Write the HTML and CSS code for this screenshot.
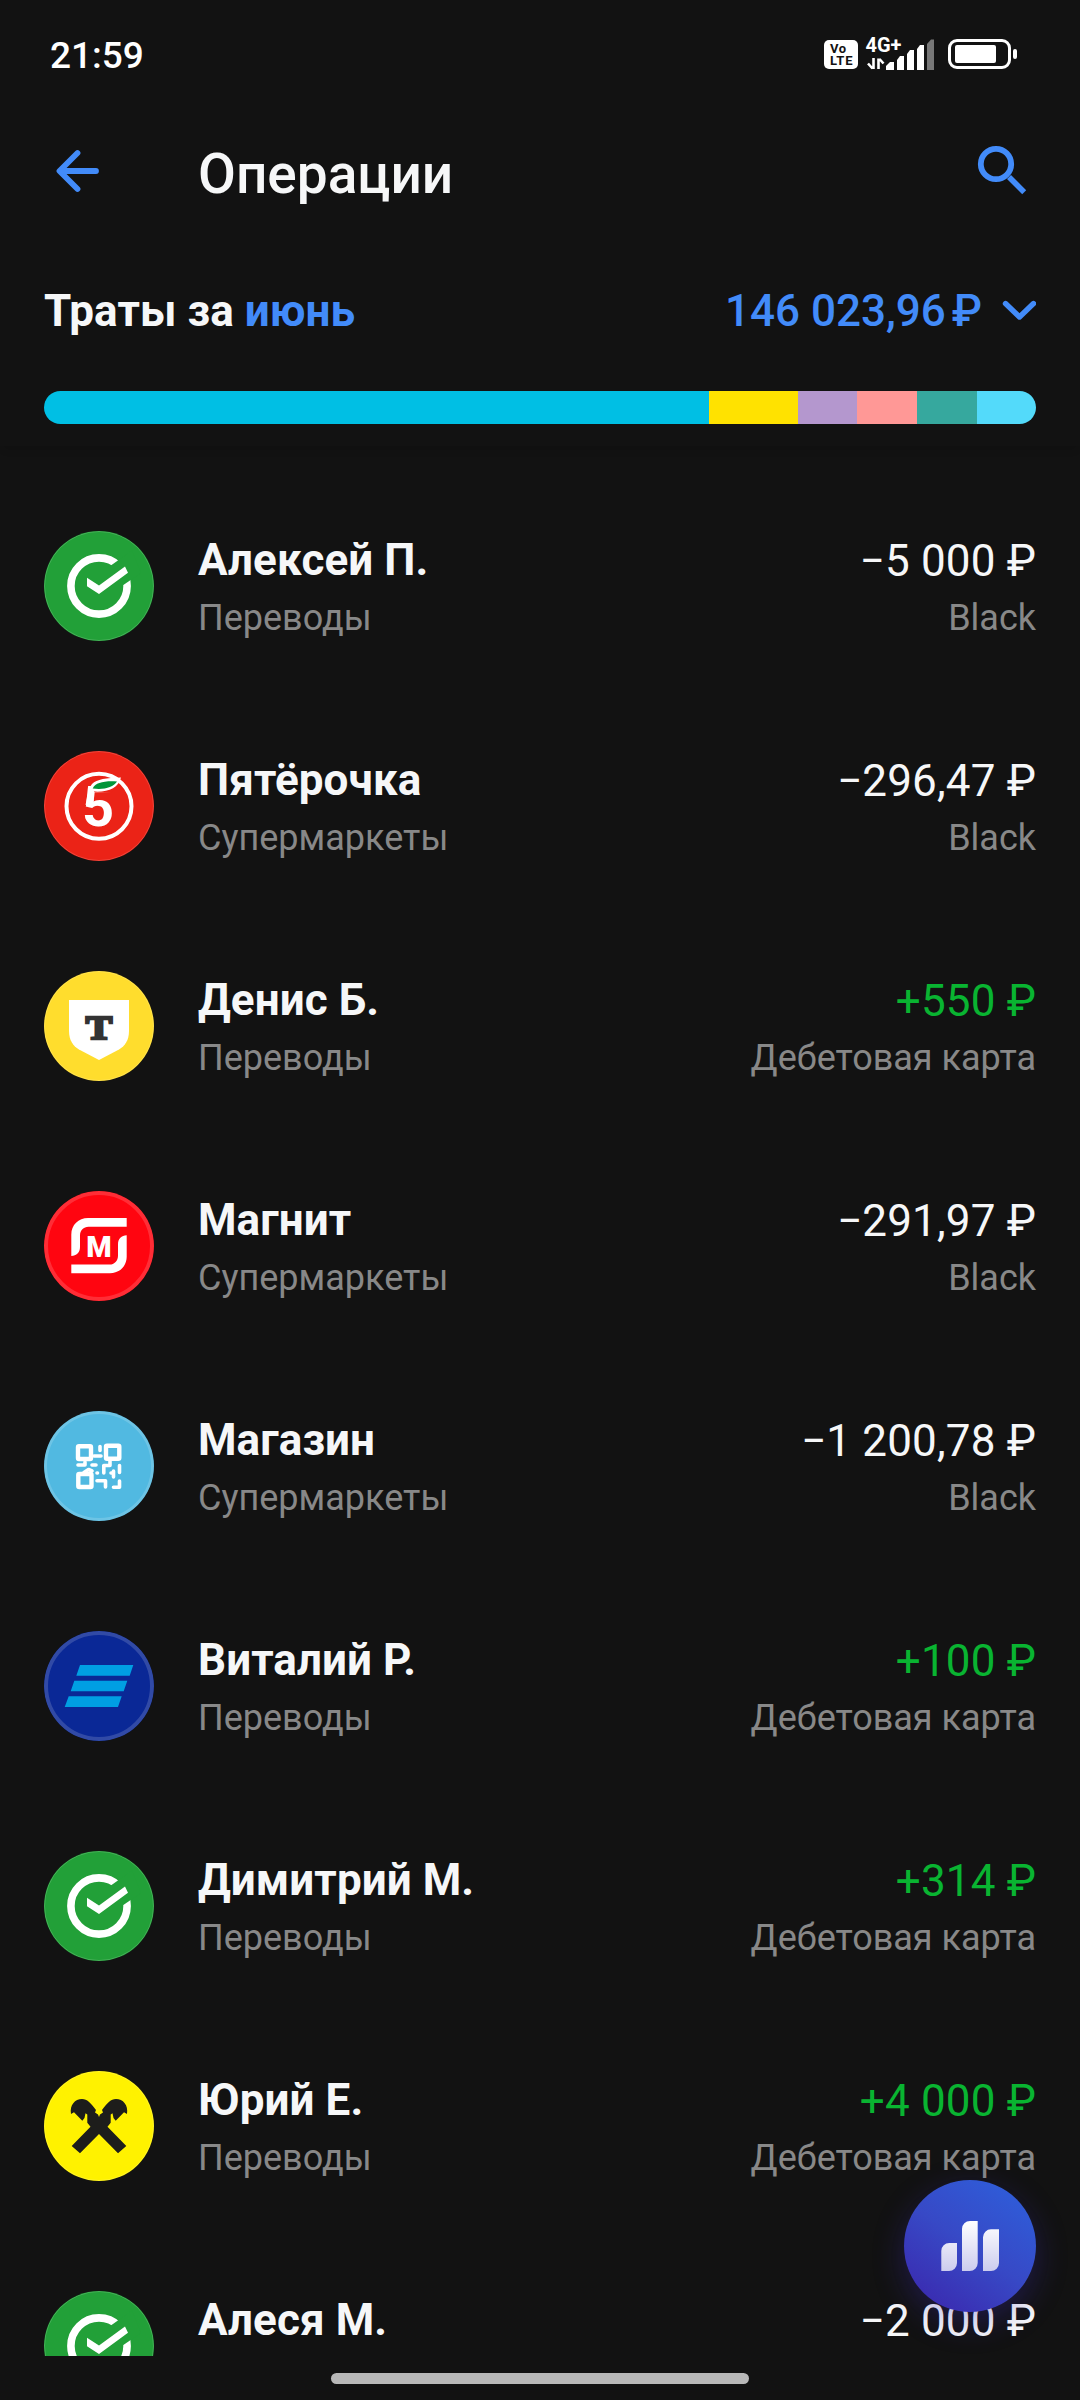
FILE: index.html
```html
<!DOCTYPE html>
<html lang="ru">
<head>
<meta charset="utf-8">
<title>Операции</title>
<link rel="stylesheet" href="styles.css">
</head>
<body>
<svg class="defs" width="0" height="0" aria-hidden="true">
  <symbol id="sber" viewBox="0 0 110 110">
    <circle cx="55" cy="55" r="28.1" fill="none" stroke="#fff" stroke-width="7.6"/>
    <path d="M64 36.6 88 19.5 97 42 76 56.2Z" fill="#22a038"/>
    <path d="M43 46.7 55 54.4 81 35.4 84 41.8 55 63 43 55.3Z" fill="#fff"/>
  </symbol>
</svg>
<div class="screen">
  <div class="status">
    <span class="clock">21:59</span>
    <svg class="status-icons" viewBox="0 0 196 40" width="196" height="40">
      <rect x="2" y="6" width="34" height="29" rx="5" fill="#fff"/>
      <text x="8" y="19" class="volte" textLength="16">Vo</text>
      <text x="8" y="31" class="volte" textLength="22.5">LTE</text>
      <text x="43.5" y="18" class="net" textLength="36">4G+</text>
      <path d="M51.500 24V35M50.500 34.500 46 29.500M56.500 35V24.500M57.500 25 61.500 29.500" stroke="#fff" stroke-width="2.600" fill="none"/>
      <path d="M64 36V32L68 28H72V36ZM75 36V26L78 22H82V36ZM85 36V20L88 16H92V36ZM95 36V15L98 11H102V36Z" fill="#fff"/>
      <path d="M105 36V10L109 5.500H112V36Z" fill="#777"/>
      <rect x="127.500" y="6.500" width="60" height="27" rx="7.500" fill="none" stroke="#fff" stroke-width="3"/>
      <rect x="133" y="11" width="41" height="18" rx="2" fill="#fff"/>
      <rect x="191" y="15" width="4" height="10" rx="2" fill="#fff"/>
    </svg>
  </div>
  <header class="appbar">
    <svg class="back" viewBox="0 0 60 60" width="60" height="60"><path d="M26.500 12 8.500 30 26.500 48M9 30H45" fill="none" stroke="#428bf9" stroke-width="5.800" stroke-linecap="round" stroke-linejoin="round"/></svg>
    <h1 class="title">Операции</h1>
    <svg class="search" viewBox="0 0 60 60" width="60" height="60"><circle cx="20" cy="23" r="15.200" fill="none" stroke="#428bf9" stroke-width="5.800"/><path d="M33 36 48.200 51.200" stroke="#428bf9" stroke-width="5.600"/></svg>
  </header>
  <section class="summary">
    <div class="summary-line">
      <h2 class="period">Траты за <span class="month">июнь</span></h2>
      <div class="total"><span class="total-sum">146 023,96</span><span class="total-cur">₽</span>
        <svg class="chevron" viewBox="0 0 34 22" width="34" height="22"><path d="M3.500 3.500 17.500 17 31.500 3.500" fill="none" stroke="#428bf9" stroke-width="5.400" stroke-linejoin="round" stroke-linecap="round"/></svg>
      </div>
    </div>
    <div class="bar">
      <i class="seg transfers"></i><i class="seg yellow"></i><i class="seg violet"></i><i class="seg pink"></i><i class="seg teal"></i><i class="seg sky"></i>
    </div>
  </section>
  <main class="list">
    <article class="row">
      <div class="logo green"><svg viewBox="0 0 110 110"><use href="#sber"/></svg></div>
      <div class="who"><div class="name">Алексей П.</div><div class="sub">Переводы</div></div>
      <div class="sum"><div class="amount">−5 000 ₽</div><div class="sub">Black</div></div>
    </article>
    <article class="row">
      <div class="logo red"><svg viewBox="0 0 110 110">
        <circle cx="55" cy="55.300" r="32.500" fill="none" stroke="#fff" stroke-width="4"/>
        <text x="38" y="75" class="five">5</text>
        <path d="M49 29H74V35L67 42 50 41Z" fill="#eb2317"/>
        <path d="M41.500 54C43.500 46 44 38 48 33 53 28 62 27 77 26.500 74.500 37 64 41.500 49.500 40.500V50Z" fill="#fff"/>
        <path d="M48.700 37.500C51.500 31.500 60 29.800 73 30.500 69 36.500 60 39 48.700 37.500Z" fill="#009639"/>
      </svg></div>
      <div class="who"><div class="name">Пятёрочка</div><div class="sub">Супермаркеты</div></div>
      <div class="sum"><div class="amount">−296,47 ₽</div><div class="sub">Black</div></div>
    </article>
    <article class="row">
      <div class="logo gold"><svg viewBox="0 0 110 110">
        <path d="M25 29H85V60C85 69 81 75 75 78.500L55 89 35 78.500C29 75 25 69 25 60Z" fill="#fff"/>
        <text x="41.800" y="68.300" class="tee" textLength="26.500" lengthAdjust="spacingAndGlyphs">T</text>
      </svg></div>
      <div class="who"><div class="name">Денис Б.</div><div class="sub">Переводы</div></div>
      <div class="sum"><div class="amount plus">+550 ₽</div><div class="sub">Дебетовая карта</div></div>
    </article>
    <article class="row">
      <div class="logo scarlet ringed"><svg viewBox="0 0 110 110">
        <path id="hook" d="M27.300 65V43.500C27.300 34 34.500 27 44 27H82.700V35.700H44.500C39.500 35.700 36 39.500 36 44.500V56C36 61.500 32.500 65 27.300 65Z" fill="#fff"/>
        <use href="#hook" transform="rotate(180 55 54.600)"/>
        <text x="55" y="65.500" class="em">М</text>
      </svg></div>
      <div class="who"><div class="name">Магнит</div><div class="sub">Супермаркеты</div></div>
      <div class="sum"><div class="amount">−291,97 ₽</div><div class="sub">Black</div></div>
    </article>
    <article class="row">
      <div class="logo blue"><svg viewBox="0 0 110 110" fill="none" stroke="#fff" stroke-linecap="round" stroke-linejoin="round">
        <g stroke-width="4.400"><rect x="34" y="35.200" width="13" height="12.800" rx="1"/><rect x="62" y="34.700" width="13.300" height="13" rx="1"/><rect x="34.300" y="63" width="13.200" height="13" rx="1"/></g>
        <path stroke-width="3.600" d="M56 35.500V39.500M50 45H57M34 54H41V51M48 54H52M40 61.500 44.500 58.500 48 60M53 62H53.500M59.800 62V54.500H66V50M75.500 54.500V61.500M67 62H69.500V66M69.500 60V63M53 69.800H61.500V76M75.500 70V76.200H69.500"/>
      </svg></div>
      <div class="who"><div class="name">Магазин</div><div class="sub">Супермаркеты</div></div>
      <div class="sum"><div class="amount">−1 200,78 ₽</div><div class="sub">Black</div></div>
    </article>
    <article class="row">
      <div class="logo navy ringed"><svg viewBox="0 0 110 110">
        <path d="M36 34H89.300L85.700 44.700H32.300ZM30.300 49.700H83.300L79.700 60.300H26.700ZM24.700 65.300H77.700L74 76H20.700Z" fill="#009fe3"/>
      </svg></div>
      <div class="who"><div class="name">Виталий Р.</div><div class="sub">Переводы</div></div>
      <div class="sum"><div class="amount plus">+100 ₽</div><div class="sub">Дебетовая карта</div></div>
    </article>
    <article class="row">
      <div class="logo green"><svg viewBox="0 0 110 110"><use href="#sber"/></svg></div>
      <div class="who"><div class="name">Димитрий М.</div><div class="sub">Переводы</div></div>
      <div class="sum"><div class="amount plus">+314 ₽</div><div class="sub">Дебетовая карта</div></div>
    </article>
    <article class="row">
      <div class="logo lemon"><svg viewBox="0 0 110 110">
        <path d="M55 63 74 82.300 82.300 75 63.500 55.700 66.700 51.700V43.500L68.500 42.300 69.500 47 71.700 49.700 80 41.300 83 43C84.500 34 79 28 72 28 66.500 28 64 31.500 58 39L59 41.500 56 43.500 55 46 54 43.500 51 41.500 52 39C46 31.500 43.500 28 38 28 31 28 25.500 34 27 43L30 41.300 38.300 49.700 40.500 47 41.500 42.300 43.300 43.500V51.700L46.500 55.700 27.700 75 36 82.300Z" fill="#1d1d1b"/>
      </svg></div>
      <div class="who"><div class="name">Юрий Е.</div><div class="sub">Переводы</div></div>
      <div class="sum"><div class="amount plus">+4 000 ₽</div><div class="sub">Дебетовая карта</div></div>
    </article>
    <article class="row">
      <div class="logo green"><svg viewBox="0 0 110 110"><use href="#sber"/></svg></div>
      <div class="who"><div class="name">Алеся М.</div></div>
      <div class="sum"><div class="amount">−2 000 ₽</div></div>
    </article>
  </main>
  <footer class="nav"><div class="pill"></div></footer>
  <div class="fab">
    <svg viewBox="0 0 132 132">
      <defs><linearGradient id="fade" gradientUnits="userSpaceOnUse" x1="0" y1="41" x2="0" y2="91"><stop offset="0" stop-color="#fff"/><stop offset="1" stop-color="#ccccee"/></linearGradient></defs>
      <path fill="url(#fade)" d="M37.300 91V71A8 8 0 0 1 45.300 63H53V83A8 8 0 0 1 45 91ZM58 91V49A8 8 0 0 1 66 41H73.700V83A8 8 0 0 1 65.700 91ZM79 91V57.300A8 8 0 0 1 87 49.300H95V83A8 8 0 0 1 87 91Z"/>
    </svg>
  </div>
</div>
</body>
</html>
```
FILE: styles.css
```css
* { box-sizing: border-box; }
body { margin: 0; background: #121212; font-family: Roboto, "Noto Sans", sans-serif; }
h1, h2 { margin: 0; }
svg { display: block; flex: none; }
.defs { position: absolute; }
.screen { position: relative; width: 1080px; height: 2400px; overflow: hidden; background: #121212; color: #f6f7f8; display: flex; flex-direction: column; }

.status { height: 110px; padding: 0 62px 0 50px; display: flex; justify-content: space-between; align-items: center; }
.clock { font-size: 37px; font-weight: 500; color: #fff; line-height: 44px; padding-top: 1px; }
.status-icons { margin-bottom: 2px; }
.volte { font: 700 13px Roboto, sans-serif; fill: #121212; }
.net { font: 700 20px Roboto, sans-serif; fill: #fff; }

.appbar { height: 122px; padding: 0 44px 0 51px; display: flex; align-items: center; }
.back { margin-right: 87px; }
.title { flex: 1; font-size: 55px; font-weight: 500; line-height: 64px; padding-top: 6px; }

.summary { height: 214px; padding: 54px 44px 0; box-shadow: 0 6px 8px -3px rgba(0, 0, 0, .14); }
.summary-line { display: flex; justify-content: space-between; align-items: center; height: 50px; }
.period { font-size: 44px; font-weight: 700; line-height: 50px; letter-spacing: .08px; }
.month { color: #428bf9; }
.total { display: flex; align-items: center; color: #428bf9; font-size: 44px; font-weight: 500; line-height: 50px; }
.total-cur { margin-left: 6px; }
.chevron { margin-left: 20px; }
.bar { margin-top: 55px; height: 33px; border-radius: 16.5px; overflow: hidden; display: grid; grid-template-columns: 665px 89px 59px 60px 60px 59px; }
.transfers { background: #00bfe4; }
.yellow { background: #ffe200; }
.violet { background: #b497ce; }
.pink { background: #ff9896; }
.teal { background: #36a89e; }
.sky { background: #53dafa; }

.list { height: 1910px; padding-top: 30px; overflow: hidden; }
.row { height: 220px; padding: 55px 44px 0; display: flex; align-items: flex-start; }
.logo { flex: none; width: 110px; height: 110px; border-radius: 50%; position: relative; overflow: hidden; }
.logo::after { content: ""; position: absolute; inset: 0; border-radius: 50%; border: 1.5px solid rgba(255, 255, 255, .16); }
.logo.ringed::after { border-width: 4px; }
.green { background: #22a038; }
.red { background: #eb2317; }
.gold { background: #ffdd2d; }
.scarlet { background: #ff0510; }
.blue { background: #51b9e1; }
.logo.blue::after { border-width: 3px; }
.navy { background: #0a2896; }
.lemon { background: #fff200; }
.five { font: 700 56px Roboto, sans-serif; fill: #fff; }
.tee { font: 700 34px "Liberation Serif", serif; fill: #333; stroke: #333; stroke-width: 2.4px; }
.em { font: 900 29px Roboto, sans-serif; fill: #fff; text-anchor: middle; }

.who { margin-left: 44px; flex: 1; padding-top: 3px; }
.sum { text-align: right; padding-top: 3px; }
.name, .amount { font-size: 44px; line-height: 52px; white-space: nowrap; }
.name { font-weight: 700; letter-spacing: .08px; }
.amount { padding-top: 1px; margin-bottom: -1px; letter-spacing: .16px; }
.plus { color: #09b431; }
.sub { margin-top: 10px; font-size: 36px; line-height: 44px; color: #888; white-space: nowrap; }

.nav { flex: 1; display: flex; justify-content: center; padding-top: 17px; }
.pill { width: 418px; height: 11px; border-radius: 6px; background: #b8b8b8; }

.fab { position: absolute; left: 904px; top: 2180px; width: 132px; height: 132px; border-radius: 50%; background: linear-gradient(35deg, #3a2bb0 10%, #3749c6 50%, #2e5fdb 95%); box-shadow: 0 10px 32px rgba(58, 43, 190, .32); }
```
